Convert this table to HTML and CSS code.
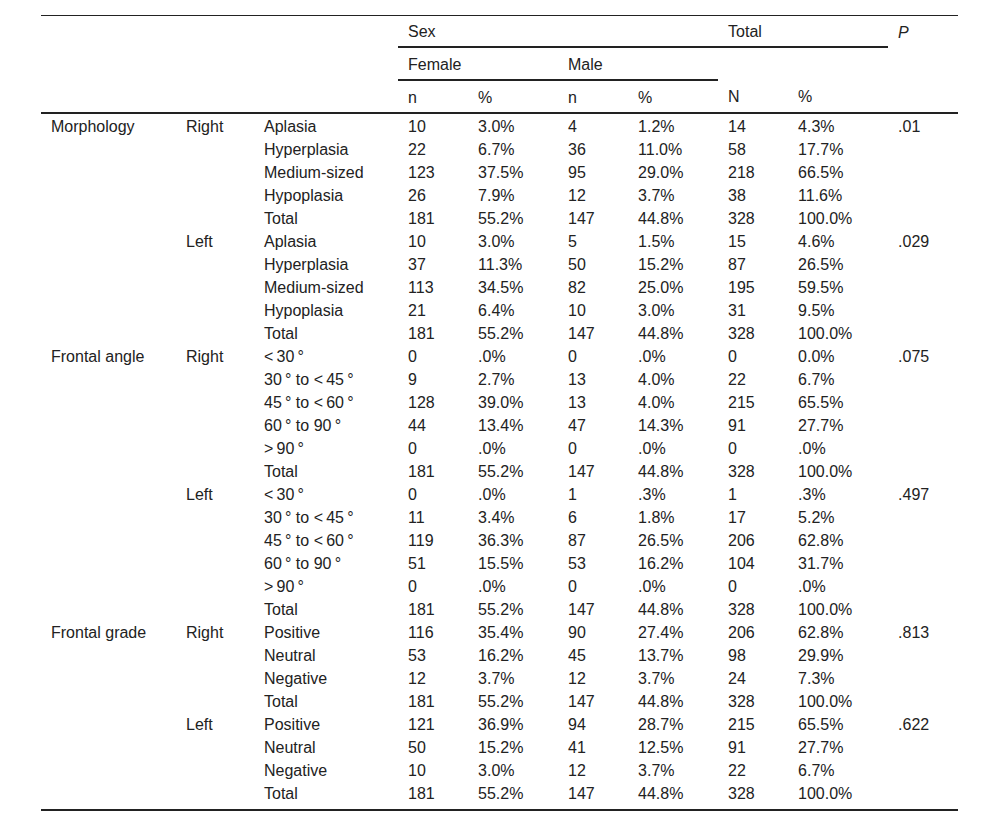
FILE: index.html
```html
<!DOCTYPE html>
<html>
<head>
<meta charset="utf-8">
<link rel="stylesheet" href="styles.css">
</head>
<body>
<div class="wrap">
<table class="tbl">
<colgroup>
<col class="c1"><col class="c2"><col class="c3"><col class="cn"><col class="cp"><col class="cn"><col class="cp"><col class="cn"><col class="cpt"><col class="cn">
</colgroup>
<thead>
<tr class="h1">
<th colspan="3" rowspan="2" class="blank"></th>
<th colspan="4" class="line">Sex</th>
<th colspan="2" class="line">Total</th>
<th class="pv"><i>P</i></th>
</tr>
<tr class="h2">
<th colspan="2" class="line">Female</th>
<th colspan="2" class="line">Male</th>
<th colspan="2"></th>
<th></th>
</tr>
<tr class="h3">
<th colspan="3"></th>
<th>n</th><th>%</th><th>n</th><th>%</th><th>N</th><th>%</th><th></th>
</tr>
</thead>
<tbody>
<tr><td>Morphology</td><td>Right</td><td>Aplasia</td><td>10</td><td>3.0%</td><td>4</td><td>1.2%</td><td>14</td><td>4.3%</td><td>.01</td></tr>
<tr><td></td><td></td><td>Hyperplasia</td><td>22</td><td>6.7%</td><td>36</td><td>11.0%</td><td>58</td><td>17.7%</td><td></td></tr>
<tr><td></td><td></td><td>Medium-sized</td><td>123</td><td>37.5%</td><td>95</td><td>29.0%</td><td>218</td><td>66.5%</td><td></td></tr>
<tr><td></td><td></td><td>Hypoplasia</td><td>26</td><td>7.9%</td><td>12</td><td>3.7%</td><td>38</td><td>11.6%</td><td></td></tr>
<tr><td></td><td></td><td>Total</td><td>181</td><td>55.2%</td><td>147</td><td>44.8%</td><td>328</td><td>100.0%</td><td></td></tr>
<tr><td></td><td>Left</td><td>Aplasia</td><td>10</td><td>3.0%</td><td>5</td><td>1.5%</td><td>15</td><td>4.6%</td><td>.029</td></tr>
<tr><td></td><td></td><td>Hyperplasia</td><td>37</td><td>11.3%</td><td>50</td><td>15.2%</td><td>87</td><td>26.5%</td><td></td></tr>
<tr><td></td><td></td><td>Medium-sized</td><td>113</td><td>34.5%</td><td>82</td><td>25.0%</td><td>195</td><td>59.5%</td><td></td></tr>
<tr><td></td><td></td><td>Hypoplasia</td><td>21</td><td>6.4%</td><td>10</td><td>3.0%</td><td>31</td><td>9.5%</td><td></td></tr>
<tr><td></td><td></td><td>Total</td><td>181</td><td>55.2%</td><td>147</td><td>44.8%</td><td>328</td><td>100.0%</td><td></td></tr>
<tr><td>Frontal angle</td><td>Right</td><td>&lt;&#8201;30&#8201;°</td><td>0</td><td>.0%</td><td>0</td><td>.0%</td><td>0</td><td>0.0%</td><td>.075</td></tr>
<tr><td></td><td></td><td>30&#8201;° to &lt;&#8201;45&#8201;°</td><td>9</td><td>2.7%</td><td>13</td><td>4.0%</td><td>22</td><td>6.7%</td><td></td></tr>
<tr><td></td><td></td><td>45&#8201;° to &lt;&#8201;60&#8201;°</td><td>128</td><td>39.0%</td><td>13</td><td>4.0%</td><td>215</td><td>65.5%</td><td></td></tr>
<tr><td></td><td></td><td>60&#8201;° to 90&#8201;°</td><td>44</td><td>13.4%</td><td>47</td><td>14.3%</td><td>91</td><td>27.7%</td><td></td></tr>
<tr><td></td><td></td><td>&gt;&#8201;90&#8201;°</td><td>0</td><td>.0%</td><td>0</td><td>.0%</td><td>0</td><td>.0%</td><td></td></tr>
<tr><td></td><td></td><td>Total</td><td>181</td><td>55.2%</td><td>147</td><td>44.8%</td><td>328</td><td>100.0%</td><td></td></tr>
<tr><td></td><td>Left</td><td>&lt;&#8201;30&#8201;°</td><td>0</td><td>.0%</td><td>1</td><td>.3%</td><td>1</td><td>.3%</td><td>.497</td></tr>
<tr><td></td><td></td><td>30&#8201;° to &lt;&#8201;45&#8201;°</td><td>11</td><td>3.4%</td><td>6</td><td>1.8%</td><td>17</td><td>5.2%</td><td></td></tr>
<tr><td></td><td></td><td>45&#8201;° to &lt;&#8201;60&#8201;°</td><td>119</td><td>36.3%</td><td>87</td><td>26.5%</td><td>206</td><td>62.8%</td><td></td></tr>
<tr><td></td><td></td><td>60&#8201;° to 90&#8201;°</td><td>51</td><td>15.5%</td><td>53</td><td>16.2%</td><td>104</td><td>31.7%</td><td></td></tr>
<tr><td></td><td></td><td>&gt;&#8201;90&#8201;°</td><td>0</td><td>.0%</td><td>0</td><td>.0%</td><td>0</td><td>.0%</td><td></td></tr>
<tr><td></td><td></td><td>Total</td><td>181</td><td>55.2%</td><td>147</td><td>44.8%</td><td>328</td><td>100.0%</td><td></td></tr>
<tr><td>Frontal grade</td><td>Right</td><td>Positive</td><td>116</td><td>35.4%</td><td>90</td><td>27.4%</td><td>206</td><td>62.8%</td><td>.813</td></tr>
<tr><td></td><td></td><td>Neutral</td><td>53</td><td>16.2%</td><td>45</td><td>13.7%</td><td>98</td><td>29.9%</td><td></td></tr>
<tr><td></td><td></td><td>Negative</td><td>12</td><td>3.7%</td><td>12</td><td>3.7%</td><td>24</td><td>7.3%</td><td></td></tr>
<tr><td></td><td></td><td>Total</td><td>181</td><td>55.2%</td><td>147</td><td>44.8%</td><td>328</td><td>100.0%</td><td></td></tr>
<tr><td></td><td>Left</td><td>Positive</td><td>121</td><td>36.9%</td><td>94</td><td>28.7%</td><td>215</td><td>65.5%</td><td>.622</td></tr>
<tr><td></td><td></td><td>Neutral</td><td>50</td><td>15.2%</td><td>41</td><td>12.5%</td><td>91</td><td>27.7%</td><td></td></tr>
<tr><td></td><td></td><td>Negative</td><td>10</td><td>3.0%</td><td>12</td><td>3.7%</td><td>22</td><td>6.7%</td><td></td></tr>
<tr class="last"><td></td><td></td><td>Total</td><td>181</td><td>55.2%</td><td>147</td><td>44.8%</td><td>328</td><td>100.0%</td><td></td></tr>
</tbody>
</table>
</div>
</body>
</html>
```

FILE: styles.css
```css
html, body {
  margin: 0;
  padding: 0;
  background: #fff;
}
.wrap {
  padding: 15px 0 0 41px;
}
.tbl {
  width: 917px;
  table-layout: fixed;
  border-collapse: collapse;
  font-family: "Liberation Sans", Arial, sans-serif;
  font-size: 16px;
  color: #222;
  border-top: 1px solid #222;
  border-bottom: 2px solid #222;
}
.c1 { width: 135px; }
.c2 { width: 78px; }
.c3 { width: 144px; }
.cn { width: 70px; }
.cp { width: 90px; }
.cpt { width: 100px; }
.tbl th {
  font-weight: normal;
  text-align: left;
  padding: 2px 10px 0;
  line-height: 18px;
  vertical-align: middle;
}
.tbl tr.h1 th { height: 28px; }
.tbl tr.h2 th { height: 29px; }
.tbl tr.h3 th { height: 29px; border-bottom: 2px solid #222; }
.tbl th.line { border-bottom: 2px solid #222; }
.tbl td {
  padding: 4px 10px 0;
  height: 19px;
  line-height: 18px;
  vertical-align: top;
  white-space: nowrap;
}
.tbl tr.last td {
  height: 19px;
  padding-top: 4px;
  padding-bottom: 5px;
}
```
